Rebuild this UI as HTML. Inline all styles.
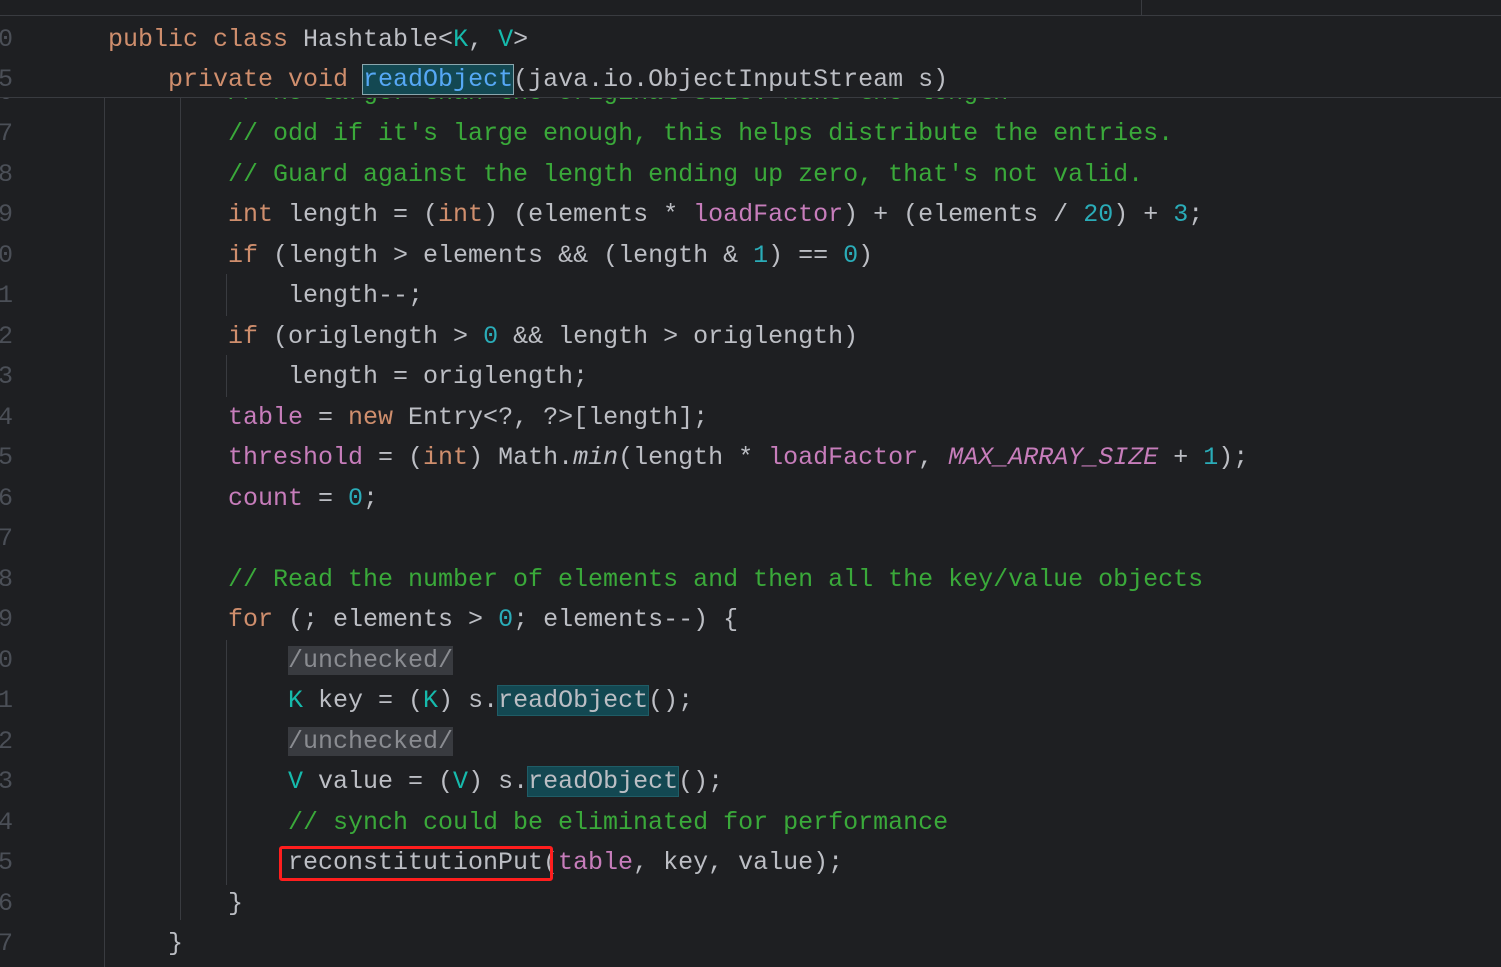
<!DOCTYPE html>
<html><head><meta charset="utf-8"><style>
body{margin:0;width:1501px;height:967px;background:#1e1f22;overflow:hidden;position:relative;font-family:"Liberation Mono",monospace;font-size:25px;color:#bcbec4}
.l{position:absolute;left:0;height:40px;line-height:40px;white-space:pre;margin-top:2px}
.n{position:absolute;left:-2px;color:#4b4f57;width:20px}
.c{position:absolute;white-space:pre}
.k{color:#cf8e6d}.t{color:#16baac}.g{color:#3aa93a}.f{color:#c77dbb}.num{color:#2aacb8}.fn{color:#56a8f5}
.i{font-style:italic}
.h{background:#134852;outline:1px solid #1f5c66}
.u{background:#393b40;color:#8a8c91}
.gd{position:absolute;width:1px;background:#393b40}
</style></head><body>
<div style="position:absolute;left:0;top:0;width:1501px;height:15px;background:#1e1f22;border-bottom:1px solid #393b40"></div>
<div style="position:absolute;left:1141px;top:0;width:1px;height:15px;background:#393b40"></div>
<div class="gd" style="left:104px;top:98px;height:869px"></div>
<div class="gd" style="left:180px;top:98px;height:822px"></div>
<div class="gd" style="left:226px;top:274px;height:42px"></div>
<div class="gd" style="left:226px;top:355px;height:42px"></div>
<div class="gd" style="left:226px;top:640px;height:245px"></div>

<div class="l" style="top:71px"><span class="n">6</span><span class="c g" style="left:228px">// no larger than the original size. Make the length</span></div>
<div class="l" style="top:112px"><span class="n">7</span><span class="c g" style="left:228px">// odd if it's large enough, this helps distribute the entries.</span></div>
<div class="l" style="top:153px"><span class="n">8</span><span class="c g" style="left:228px">// Guard against the length ending up zero, that's not valid.</span></div>
<div class="l" style="top:193px"><span class="n">9</span><span class="c" style="left:228px"><span class="k">int</span> length = (<span class="k">int</span>) (elements * <span class="f">loadFactor</span>) + (elements / <span class="num">20</span>) + <span class="num">3</span>;</span></div>
<div class="l" style="top:234px"><span class="n">0</span><span class="c" style="left:228px"><span class="k">if</span> (length &gt; elements &amp;&amp; (length &amp; <span class="num">1</span>) == <span class="num">0</span>)</span></div>
<div class="l" style="top:274px"><span class="n">1</span><span class="c" style="left:288px">length--;</span></div>
<div class="l" style="top:315px"><span class="n">2</span><span class="c" style="left:228px"><span class="k">if</span> (origlength &gt; <span class="num">0</span> &amp;&amp; length &gt; origlength)</span></div>
<div class="l" style="top:355px"><span class="n">3</span><span class="c" style="left:288px">length = origlength;</span></div>
<div class="l" style="top:396px"><span class="n">4</span><span class="c" style="left:228px"><span class="f">table</span> = <span class="k">new</span> Entry&lt;?, ?&gt;[length];</span></div>
<div class="l" style="top:436px"><span class="n">5</span><span class="c" style="left:228px"><span class="f">threshold</span> = (<span class="k">int</span>) Math.<span class="i">min</span>(length * <span class="f">loadFactor</span>, <span class="f i">MAX_ARRAY_SIZE</span> + <span class="num">1</span>);</span></div>
<div class="l" style="top:477px"><span class="n">6</span><span class="c" style="left:228px"><span class="f">count</span> = <span class="num">0</span>;</span></div>
<div class="l" style="top:517px"><span class="n">7</span></div>
<div class="l" style="top:558px"><span class="n">8</span><span class="c g" style="left:228px">// Read the number of elements and then all the key/value objects</span></div>
<div class="l" style="top:598px"><span class="n">9</span><span class="c" style="left:228px"><span class="k">for</span> (; elements &gt; <span class="num">0</span>; elements--) {</span></div>
<div class="l" style="top:639px"><span class="n">0</span><span class="c" style="left:288px"><span class="u">/unchecked/</span></span></div>
<div class="l" style="top:679px"><span class="n">1</span><span class="c" style="left:288px"><span class="t">K</span> key = (<span class="t">K</span>) s.<span class="h">readObject</span>();</span></div>
<div class="l" style="top:720px"><span class="n">2</span><span class="c" style="left:288px"><span class="u">/unchecked/</span></span></div>
<div class="l" style="top:760px"><span class="n">3</span><span class="c" style="left:288px"><span class="t">V</span> value = (<span class="t">V</span>) s.<span class="h">readObject</span>();</span></div>
<div class="l" style="top:801px"><span class="n">4</span><span class="c g" style="left:288px">// synch could be eliminated for performance</span></div>
<div class="l" style="top:841px"><span class="n">5</span><span class="c" style="left:288px">reconstitutionPut(<span class="f">table</span>, key, value);</span></div>
<div class="l" style="top:882px"><span class="n">6</span><span class="c" style="left:228px">}</span></div>
<div class="l" style="top:922px"><span class="n">7</span><span class="c" style="left:168px">}</span></div>
<div style="position:absolute;left:279px;top:846px;width:268px;height:29px;border:3px solid #ff1e1e;border-radius:3px"></div>

<div style="position:absolute;left:0;top:16px;width:1501px;height:81px;background:#1e1f22;border-bottom:1px solid #393b40"></div>
<div class="l" style="top:18px"><span class="n">0</span><span class="c" style="left:108px"><span class="k">public class</span> Hashtable&lt;<span class="t">K</span>, <span class="t">V</span>&gt;</span></div>
<div class="l" style="top:58px"><span class="n">5</span><span class="c" style="left:168px"><span class="k">private void</span> <span class="fn h" style="outline:1px solid #8aa6ad">readObject</span>(java.io.ObjectInputStream s)</span></div>
</body></html>
